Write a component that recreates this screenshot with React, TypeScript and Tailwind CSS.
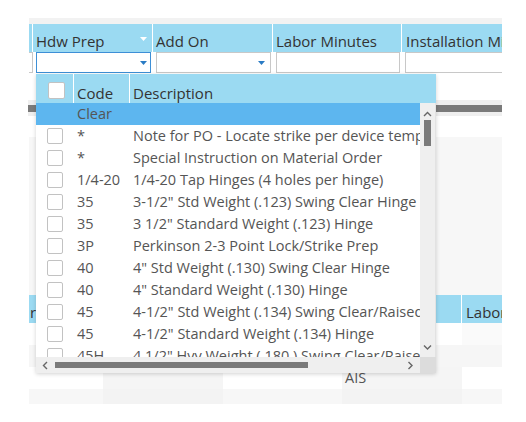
import React from "react";

const rows: [string, string][] = [
  ["*", "Note for PO - Locate strike per device template"],
  ["*", "Special Instruction on Material Order"],
  ["1/4-20", "1/4-20 Tap Hinges (4 holes per hinge)"],
  ["35", '3-1/2" Std Weight (.123) Swing Clear Hinge'],
  ["35", '3 1/2" Standard Weight (.123) Hinge'],
  ["3P", "Perkinson 2-3 Point Lock/Strike Prep"],
  ["40", '4" Std Weight (.130) Swing Clear Hinge'],
  ["40", '4" Standard Weight (.130) Hinge'],
  ["45", '4-1/2" Std Weight (.134) Swing Clear/Raised Barrel Hinge'],
  ["45", '4-1/2" Standard Weight (.134) Hinge'],
  ["45H", '4 1/2" Hvy Weight (.180 ) Swing Clear/Raised Barrel Hinge'],
];

function Tri({ color }: { color: string }) {
  return (
    <svg width="7" height="4" viewBox="0 0 7 4">
      <polygon points="0,0 7,0 3.5,4" fill={color} />
    </svg>
  );
}

function Chevron({ dir }: { dir: "up" | "down" | "left" | "right" }) {
  const pts =
    dir === "up"
      ? "1,5 4.5,1.5 8,5"
      : dir === "down"
      ? "1,1.5 4.5,5 8,1.5"
      : dir === "left"
      ? "5,1 1.5,4.5 5,8"
      : "1.5,1 5,4.5 1.5,8";
  const w = dir === "up" || dir === "down" ? 9 : 7;
  const h = dir === "up" || dir === "down" ? 7 : 9;
  return (
    <svg width={w} height={h} viewBox={`0 0 ${w} ${h}`}>
      <polyline points={pts} fill="none" stroke="#666" strokeWidth="1.4" />
    </svg>
  );
}

function Box() {
  return <div className="w-[16px] h-[16px] bg-white border border-[#c2c2c2] rounded-[2px]" />;
}

export default function App() {
  return (
    <div className="relative w-[526px] h-[422px] bg-white overflow-hidden font-['Open_Sans',sans-serif]">
      <div className="pt-[18px] pl-[29px] w-[502px]">
        <div className="h-[6px] bg-[#f2f2f2]" />
        {/* header */}
        <div className="flex h-[28px] bg-[#9bdaf2] text-[15px] text-[#333] leading-[20px]">
          <div className="w-[4px] border-r border-white" />
          <div className="relative w-[120px] border-r border-white pl-[3px] flex items-end pb-[1px]">
            Hdw Prep
            <div className="absolute right-[5px] top-[13px] flex">
              <Tri color="#ffffff" />
            </div>
          </div>
          <div className="w-[120px] border-r border-white pl-[3px] flex items-end pb-[1px]">Add On</div>
          <div className="w-[129px] border-r border-white pl-[3px] flex items-end pb-[1px]">Labor Minutes</div>
          <div className="flex-1 pl-[4px] flex items-end pb-[1px] whitespace-nowrap overflow-hidden">Installation Minutes</div>
        </div>
        {/* filter row */}
        <div className="flex h-[22px] bg-white">
          <div className="w-[4px] h-[21px] border border-l-0 border-[#c8c8c8]" />
          <div className="w-[120px] pl-[3px] pr-[2px]">
            <div className="h-[21px] border border-[#3d8fd6] bg-white flex items-center justify-end pr-[3px]">
              <Tri color="#2a7bc4" />
            </div>
          </div>
          <div className="w-[120px] pl-[3px] pr-[2px]">
            <div className="h-[21px] border border-[#c8c8c8] bg-white flex items-center justify-end pr-[5px]">
              <Tri color="#2a7bc4" />
            </div>
          </div>
          <div className="w-[129px] pl-[3px] pr-[2px]">
            <div className="h-[21px] border border-[#c8c8c8] bg-white" />
          </div>
          <div className="flex-1 pl-[3px]">
            <div className="h-[21px] border border-r-0 border-[#c8c8c8] bg-white" />
          </div>
        </div>
        <div className="h-[26px] bg-white" />
        {/* scrollbar of upper grid */}
        <div className="h-[16px] bg-[#efefef] flex items-center -ml-[1px]">
          <div className="h-[7px] w-full bg-[#7a7a7a]" />
        </div>
        <div className="h-[21px] bg-white" />
        <div className="h-[158px] bg-[#f7f7f7]" />
        {/* lower grid header */}
        <div className="flex h-[28px] bg-[#9bdaf2] text-[15px] text-[#333] leading-[20px]">
          <div className="w-[433px] border-r border-white pl-[1px] flex items-end pb-[1px]">r</div>
          <div className="flex-1 pl-[4px] flex items-end pb-[1px] overflow-hidden whitespace-nowrap">Labor Minutes</div>
        </div>
        <div className="flex h-[22px]">
          <div className="w-[433px] bg-white" />
          <div className="flex-1 bg-[#fafafa]" />
        </div>
        <div className="h-[22px] bg-[#f6f6f6]" />
        <div className="flex h-[22px] text-[14.5px] text-[#555]">
          <div className="w-[74px] bg-white" />
          <div className="w-[120px] bg-[#f5f5f5]" />
          <div className="w-[119px] bg-white" />
          <div className="w-[120px] bg-[#f5f5f5] pl-[3px] flex items-center">AIS</div>
          <div className="flex-1 bg-white" />
        </div>
        <div className="flex h-[15px]">
          <div className="w-[74px] bg-[#f7f7f7]" />
          <div className="w-[120px] bg-[#f3f3f3]" />
          <div className="w-[119px] bg-[#f7f7f7]" />
          <div className="w-[120px] bg-[#f3f3f3]" />
          <div className="flex-1 bg-[#f7f7f7]" />
        </div>
      </div>

      {/* popup */}
      <div className="absolute left-[36px] top-[74px] w-[400px] h-[299px] bg-white flex flex-col shadow-[0_1px_4px_rgba(0,0,0,0.18)]">
        <div className="flex h-[29px] bg-[#9bdaf2] text-[15px] text-[#333] leading-[20px]">
          <div className="w-[38px] border-r border-white flex items-center pl-[12px] pt-[3px]">
            <div className="w-[17px] h-[17px] bg-white border border-[#c2c2c2] rounded-[2px]" />
          </div>
          <div className="w-[56px] border-r border-white pl-[3px] flex items-end pb-[0px]">Code</div>
          <div className="flex-1 pl-[3px] flex items-end pb-[0px]">Description</div>
        </div>
        <div className="flex h-[254px]">
          <div className="w-[384px] overflow-hidden text-[14.5px] text-[#555] leading-[22px]">
            <div className="flex h-[22px] bg-[#5db6ef]">
              <div className="w-[38px] shrink-0" />
              <div className="w-[56px] shrink-0 pl-[3px]">Clear</div>
              <div className="flex-1" />
            </div>
            {rows.map(([c, d], i) => (
              <div key={i} className="flex h-[22px] items-center whitespace-nowrap">
                <div className="w-[38px] shrink-0 pl-[11px] flex items-center">
                  <Box />
                </div>
                <div className="w-[56px] shrink-0 pl-[3px]">{c}</div>
                <div className="shrink-0 pl-[3px]">{d}</div>
              </div>
            ))}
          </div>
          <div className="w-[16px] bg-[#efefef] border-r border-[#e2e2e2] flex flex-col items-center">
            <div className="h-[17px] flex items-end justify-center pb-[2px]">
              <Chevron dir="up" />
            </div>
            <div className="w-[7px] h-[26px] bg-[#7a7a7a]" />
            <div className="flex-1" />
            <div className="h-[16px] flex items-start justify-center pt-[3px]">
              <Chevron dir="down" />
            </div>
          </div>
        </div>
        <div className="flex h-[16px]">
          <div className="w-[384px] bg-[#efefef] flex items-center">
            <div className="w-[19px] flex justify-center">
              <Chevron dir="left" />
            </div>
            <div className="w-[253px] h-[6px] bg-[#7a7a7a]" />
            <div className="flex-1" />
            <div className="w-[19px] flex justify-center">
              <Chevron dir="right" />
            </div>
          </div>
          <div className="w-[16px] bg-[#dcdcdc]" />
        </div>
      </div>
    </div>
  );
}
